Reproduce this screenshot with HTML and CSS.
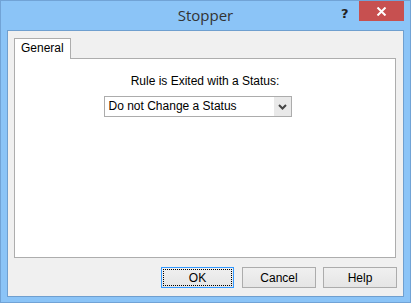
FILE: index.html
```html
<!DOCTYPE html>
<html lang="en">

<head>
  <meta charset="UTF-8">
  <title>Stopper</title>
  <link rel="stylesheet" href="styles.css">
</head>

<body>
  <div class="window">
    <div class="titlebar">
      <div class="title">Stopper</div>
      <div class="help-btn">?</div>
      <div class="close-btn">
        <svg width="11" height="9" viewBox="0 0 11 9">
          <path d="M1.5 0.5 L9.5 8.5 M9.5 0.5 L1.5 8.5" stroke="#fff" stroke-width="2" />
        </svg>
      </div>
    </div>

    <div class="client">
      <div class="tabs">
        <div class="tab">General</div>
      </div>
      <div class="panel">
        <label class="field-label">Rule is Exited with a Status:</label>
        <div class="select">
          <span class="select-text">Do not Change a Status</span>
          <span class="select-arrow">
            <svg width="9" height="6" viewBox="0 0 9 6">
              <path d="M1 1 L4.5 4.5 L8 1" stroke="#444" stroke-width="2" fill="none" />
            </svg>
          </span>
        </div>
      </div>
      <div class="actions">
        <button class="btn default" type="button"><span class="focus">OK</span></button>
        <button class="btn" type="button">Cancel</button>
        <button class="btn" type="button">Help</button>
      </div>
    </div>
  </div>
</body>

</html>
```

FILE: styles.css
```css
body {
  margin: 0;
  font-family: 'Liberation Sans', Arial, sans-serif;
  font-size: 12px;
  color: #000;
}

.window {
  width: 411px;
  height: 303px;
  box-sizing: border-box;
  background: #8bc4f7;
  border: 1px solid #71a3d6;
  display: flex;
  flex-direction: column;
}

/* title bar */
.titlebar {
  height: 29px;
  display: flex;
  position: relative;
}

.title {
  flex: 1;
  text-align: center;
  font-family: 'Open Sans', 'Noto Sans', sans-serif;
  font-size: 15px;
  color: #333;
  line-height: 29px;
}

.help-btn {
  position: absolute;
  left: 340px;
  top: 5px;
  font-family: 'DejaVu Sans', sans-serif;
  font-weight: bold;
  font-size: 13px;
  color: #222;
}

.close-btn {
  position: absolute;
  left: 358px;
  top: 0;
  width: 45px;
  height: 20px;
  background: #c75050;
  display: flex;
  align-items: center;
  justify-content: center;
}

/* client area */
.client {
  flex: 1;
  margin: 0 6px 6px 6px;
  background: #f0f0f0;
  border: 1px solid #6f9fcf;
  padding: 7px 7px 8px 6px;
  display: flex;
  flex-direction: column;
}

.tabs {
  display: flex;
}

.tab {
  background: #fff;
  border: 1px solid #adadad;
  border-bottom: none;
  height: 20px;
  line-height: 19px;
  padding: 0 6px 0 6px;
  margin-bottom: -1px;
  position: relative;
  z-index: 1;
}

.panel {
  height: 198px;
  background: #fff;
  border: 1px solid #adadad;
  display: flex;
  flex-direction: column;
  align-items: center;
}

.field-label {
  margin-top: 15px;
  height: 14px;
  line-height: 14px;
}

.select {
  margin-top: 8px;
  width: 188px;
  height: 21px;
  box-sizing: border-box;
  border: 1px solid #acacac;
  background: #fff;
  display: flex;
  margin-right: 15px;
}

.select-text {
  flex: 1;
  padding-left: 4px;
  line-height: 19px;
}

.select-arrow {
  width: 17px;
  background: #e9e9e9;
  display: flex;
  align-items: center;
  justify-content: center;
}

/* buttons */
.actions {
  display: flex;
  justify-content: flex-end;
  gap: 7px;
  margin-top: 9px;
  margin-right: -1px;
}

.btn {
  width: 74px;
  height: 21px;
  padding: 0;
  border: 1px solid #acacac;
  background: linear-gradient(#f0f0f0, #e5e5e5);
  font-family: 'Liberation Sans', Arial, sans-serif;
  font-size: 12px;
  color: #000;
}

.btn.default {
  width: 73px;
  margin-right: 1px;
  border-color: #3399ff;
  padding: 1px;
}

.focus {
  display: flex;
  height: 100%;
  box-sizing: border-box;
  border: 1px dotted #000;
  align-items: center;
  justify-content: center;
}
```
